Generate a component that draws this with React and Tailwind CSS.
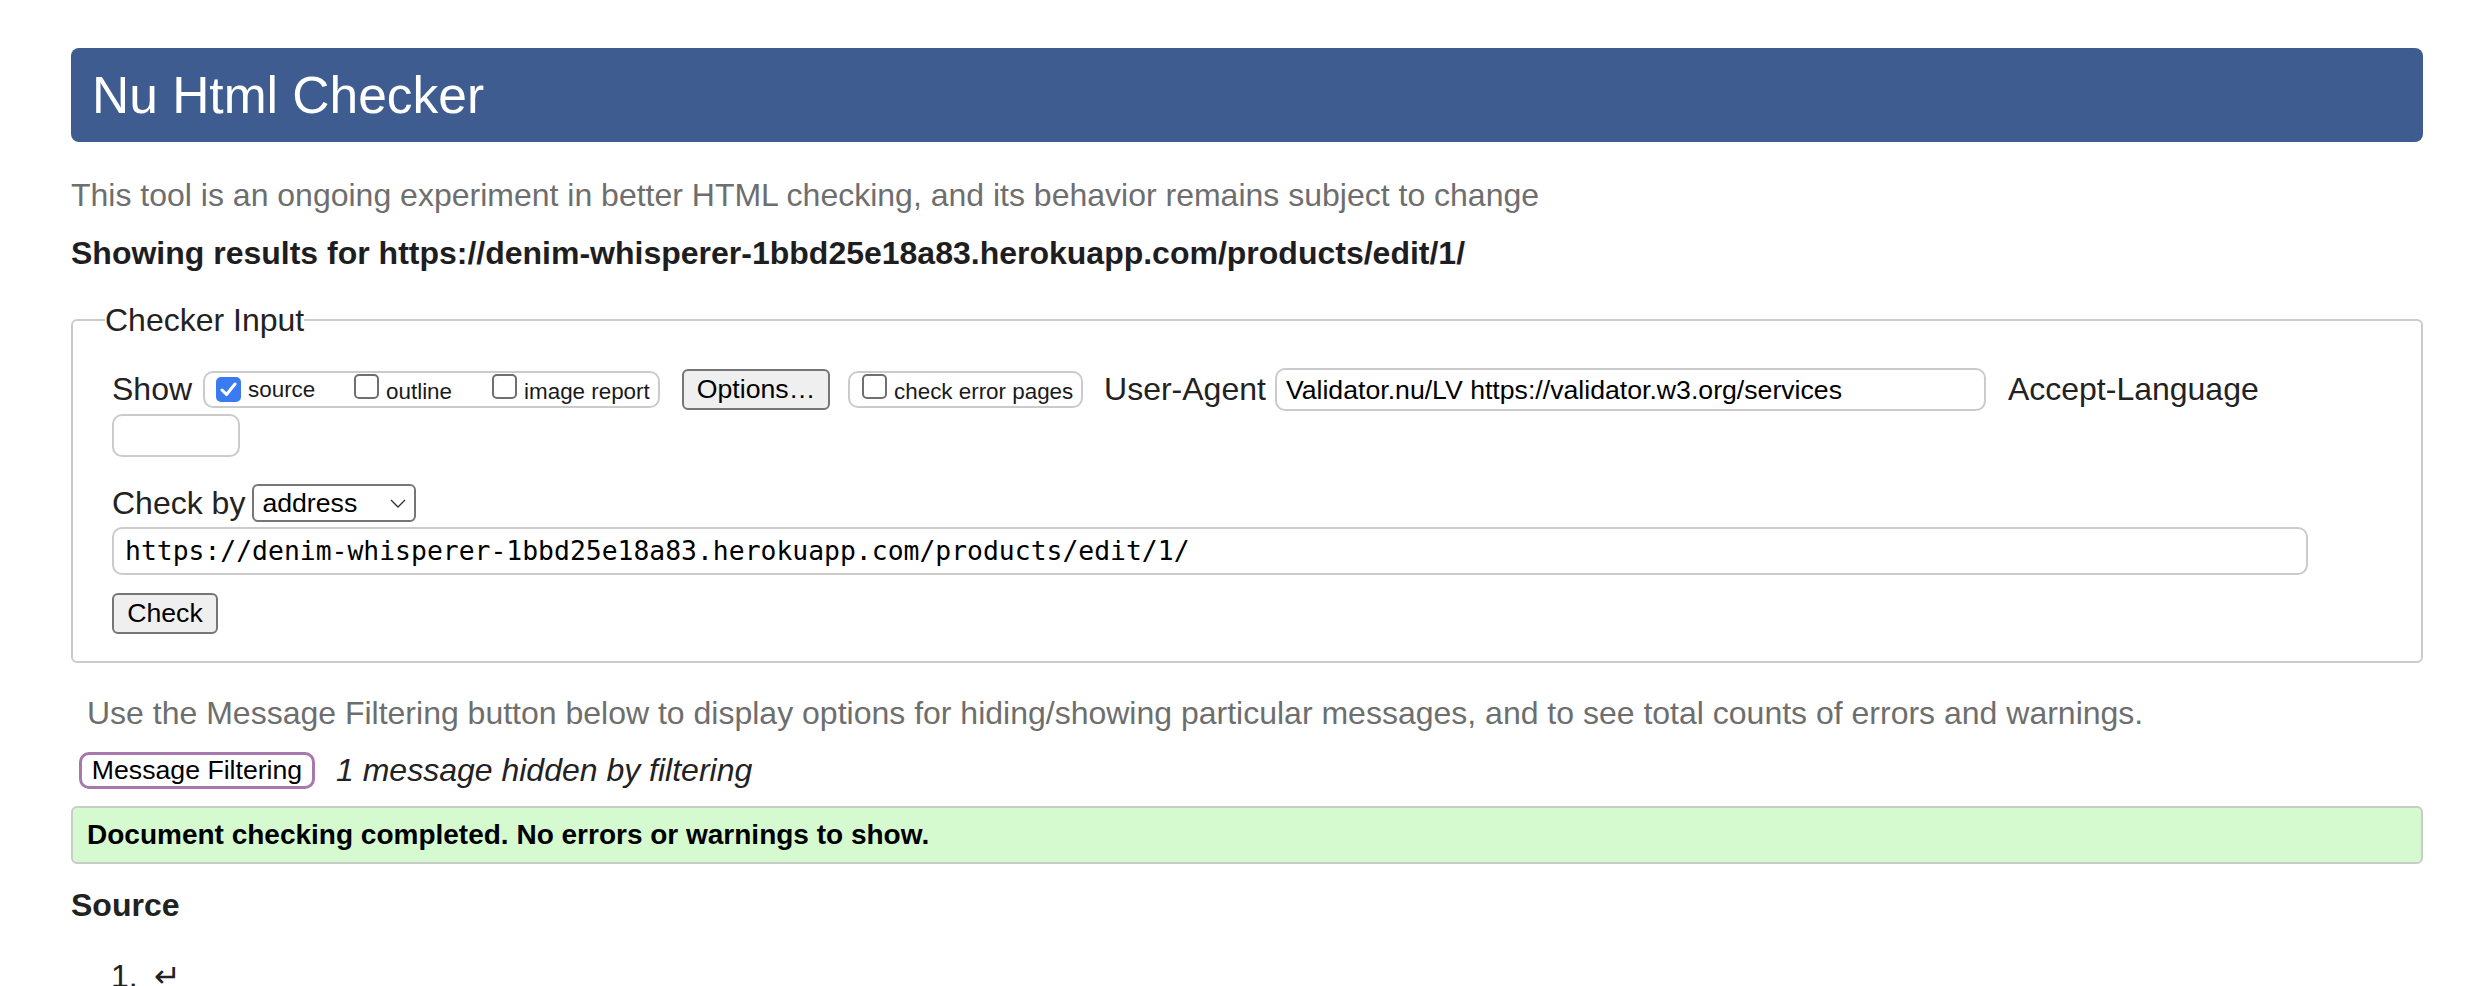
import React from 'react';

const Box = ({ checked, size = 'w-[25px] h-[25px]' }) => (
  <div
    className={`${size} shrink-0 rounded-[5px] flex items-center justify-center ${
      checked ? 'bg-[#3a7bf2] border-2 border-[#3a7bf2]' : 'bg-white border-2 border-[#6f6f6f]'
    }`}
  >
    {checked && (
      <svg width="17" height="15" viewBox="0 0 17 15" fill="none">
        <path d="M2 8 L6.5 12.5 L15 2" stroke="white" strokeWidth="3" strokeLinecap="round" strokeLinejoin="round" />
      </svg>
    )}
  </div>
);

const Check = ({ label, checked, className = '' }) => (
  <label className={`flex items-baseline ${className}`}>
    <Box checked={checked} />
    <span className="ml-[7px] text-[22.4px] leading-[28px] text-[#1a1a1a]">{label}</span>
  </label>
);

const App = () => {
  return (
    <div className="min-h-screen bg-white pl-[71px] pr-[69px] font-['Liberation_Sans',Arial,sans-serif] text-[#222]">
      {/* header */}
      <div className="mt-[48px] h-[94px] rounded-[8px] bg-[#3e5c8f] flex items-center pl-[21px]">
        <h1 className="text-[51.5px] leading-[58px] text-white">Nu Html Checker</h1>
      </div>

      <p className="mt-[35px] text-[32px] leading-[37px] text-[#6e6e6e]">
        This tool is an ongoing experiment in better HTML checking, and its behavior remains subject to change
      </p>
      <p className="mt-[21px] text-[32px] leading-[37px] font-bold text-[#1e1e22]">
        Showing results for https://denim-whisperer-1bbd25e18a83.herokuapp.com/products/edit/1/
      </p>

      {/* checker input */}
      <fieldset className="mt-[30px] border-2 border-[#cbcbcb] rounded-[6px] pl-[39px] pr-[39px] pt-[30px] pb-[27px]">
        <legend className="ml-[-7px] text-[32px] leading-[36px] text-[#222]">Checker Input</legend>

        <div className="flex items-center h-[43px] text-[32px]">
          <span className="leading-[37px]">Show</span>
          <div className="ml-[11px] h-[37px] w-[457px] border-2 border-[#cbcbcb] rounded-[10px] pl-[11px] flex items-center">
            <Check label="source" checked className="w-[138px]" />
            <Check label="outline" className="w-[138px]" />
            <Check label="image report" />
          </div>
          <button className="ml-[22px] h-[41px] w-[148px] bg-[#efefef] border-2 border-[#767676] rounded-[6px] text-[26.67px] leading-none text-black">
            Options…
          </button>
          <div className="ml-[18px] h-[37px] w-[235px] border-2 border-[#cbcbcb] rounded-[10px] pl-[12px] flex items-center">
            <Check label="check error pages" />
          </div>
          <span className="ml-[21px] leading-[37px]">User-Agent</span>
          <div className="ml-[9px] h-[43px] w-[711px] border-2 border-[#cbcbcb] rounded-[10px] pl-[9px] flex items-center text-[26.67px] text-black">
            Validator.nu/LV https://validator.w3.org/services
          </div>
          <span className="ml-[22px] leading-[37px]">Accept-Language</span>
        </div>
        <div className="mt-[3px] h-[43px] w-[128px] border-2 border-[#cbcbcb] rounded-[10px]" />

        <div className="mt-[27px] flex items-center h-[38px]">
          <span className="text-[32px] leading-[37px]">Check by</span>
          <div className="ml-[7px] h-[38px] w-[164px] border-2 border-[#767676] rounded-[6px] pl-[8px] pr-[8px] flex items-center justify-between text-[26.67px] text-black">
            <span>address</span>
            <svg width="16" height="9" viewBox="0 0 16 9" fill="none">
              <path d="M1 1 L8 8 L15 1" stroke="#333" strokeWidth="1.4" />
            </svg>
          </div>
        </div>

        <div className="mt-[5px] h-[48px] w-[2196px] border-2 border-[#cbcbcb] rounded-[10px] pl-[11px] flex items-center font-['DejaVu_Sans_Mono',monospace] text-[26.4px] text-black">
          https://denim-whisperer-1bbd25e18a83.herokuapp.com/products/edit/1/
        </div>

        <button className="mt-[18px] h-[41px] w-[106px] bg-[#efefef] border-2 border-[#767676] rounded-[6px] text-[26.67px] leading-none text-black">
          Check
        </button>
      </fieldset>

      <p className="mt-[32px] pl-[16px] text-[32px] leading-[37px] text-[#6e6e6e]">
        Use the Message Filtering button below to display options for hiding/showing particular messages, and to see total counts of errors and warnings.
      </p>

      <div className="mt-[20px] pl-[8px] flex items-center h-[37px]">
        <button className="h-[37px] w-[236px] border-[3px] border-[#a678ae] rounded-[10px] bg-white text-[26.67px] leading-none text-black">
          Message Filtering
        </button>
        <span className="ml-[21px] text-[32px] leading-[37px] italic text-[#222]">1 message hidden by filtering</span>
      </div>

      <div className="mt-[17px] h-[58px] border-2 border-[#cbcbcb] rounded-[6px] bg-[#d5fad0] pl-[14px] flex items-center">
        <span className="text-[28px] leading-[32px] font-bold text-black">
          Document checking completed. No errors or warnings to show.
        </span>
      </div>

      <h2 className="mt-[23px] text-[32px] leading-[37px] font-bold text-[#222]">Source</h2>

      <ol className="mt-[34px] pl-[40px] text-[32px] leading-[37px] text-[#222]">
        <li className="flex">
          <span>1.</span>
          <span className="ml-[16px]">↵</span>
        </li>
      </ol>
    </div>
  );
};

export default App;
